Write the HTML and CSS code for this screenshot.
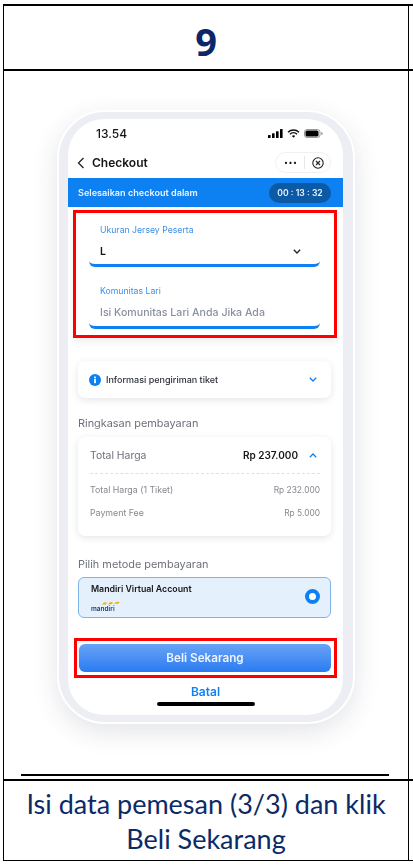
FILE: index.html
```html
<!DOCTYPE html>
<html lang="en">
<head>
    <meta charset="UTF-8">
    <meta name="viewport" content="width=device-width, initial-scale=1.0">
    <link rel="stylesheet" href="styles.css">
    <title>Checkout</title>
</head>
<body>
  <table class="sheet">
    <tr class="row-number">
      <td class="step-number">9</td>
      <td></td>
    </tr>
    <tr class="row-shot">
      <td class="shot">
        <div class="phone">
          <div class="screen">
            <div class="status">
              <span class="time">13.54</span>
              <span class="status-icons">
                <svg width="15" height="9" viewBox="0 0 15 9"><rect x="0" y="6" width="2.6" height="3" rx=".6"/><rect x="4" y="4.2" width="2.6" height="4.8" rx=".6"/><rect x="8" y="2.2" width="2.6" height="6.8" rx=".6"/><rect x="12" y="0" width="2.6" height="9" rx=".6"/></svg>
                <svg width="13" height="9" viewBox="0 0 13 9"><path d="M1 3.2a8 8 0 0 1 11 0M3 5.2a5 5 0 0 1 7 0" fill="none" stroke="#111" stroke-width="1.5"/><path d="M4.9 6.9a2.4 2.4 0 0 1 3.2 0L6.500 8.800z"/></svg>
                <svg width="19" height="9" viewBox="0 0 19 9"><rect x=".5" y=".5" width="15.500" height="8" rx="2.500" fill="none" stroke="#999"/><rect x="1.500" y="1.500" width="13" height="6" rx="1.500"/><path d="M17.200 3v3a1.500 1.500 0 0 0 0-3z" fill="#999"/></svg>
              </span>
            </div>
            <div class="nav">
              <svg class="back" width="8" height="12" viewBox="0 0 8 12"><path d="M6.500 1L1.500 6l5 5" fill="none" stroke="#222" stroke-width="1.300"/></svg>
              <span class="nav-title">Checkout</span>
              <span class="capsule">
                <span class="dots">&bull;&bull;&bull;</span>
                <span class="capsule-line"></span>
                <svg width="12" height="12" viewBox="0 0 12 12"><circle cx="6" cy="6" r="5.200" fill="none" stroke="#222" stroke-width="1.100"/><path d="M4 4l4 4M8 4l-4 4" stroke="#222" stroke-width="1.100"/></svg>
              </span>
            </div>
            <div class="timer-bar">
              <span>Selesaikan checkout dalam</span>
              <span class="timer">00 : 13 : 32</span>
            </div>

            <div class="form-mark">
              <div class="field">
                <div class="field-label">Ukuran Jersey Peserta</div>
                <div class="field-value">
                  <span>L</span>
                  <svg width="8" height="5" viewBox="0 0 8 5"><path d="M.8.8L4 4l3.200-3.200" fill="none" stroke="#222" stroke-width="1.300"/></svg>
                </div>
              </div>
              <div class="field">
                <div class="field-label">Komunitas Lari</div>
                <div class="field-value placeholder">Isi Komunitas Lari Anda Jika Ada</div>
              </div>
            </div>

            <div class="card info">
              <svg width="12" height="12" viewBox="0 0 12 12"><circle cx="6" cy="6" r="6" fill="#0d80f2"/><rect x="5.100" y="5" width="1.800" height="4.200" fill="#fff"/><rect x="5.100" y="2.600" width="1.800" height="1.700" fill="#fff"/></svg>
              <span class="info-text">Informasi pengiriman tiket</span>
              <svg class="chev" width="8" height="5" viewBox="0 0 8 5"><path d="M.8.8L4 4l3.200-3.200" fill="none" stroke="#0d80f2" stroke-width="1.300"/></svg>
            </div>

            <div class="section-title">Ringkasan pembayaran</div>
            <div class="card summary">
              <div class="summary-head">
                <span class="total-label">Total Harga</span>
                <span class="total-value">Rp 237.000</span>
                <svg class="chev" width="8" height="5" viewBox="0 0 8 5"><path d="M.8 4.200L4 1l3.200 3.200" fill="none" stroke="#0d80f2" stroke-width="1.300"/></svg>
              </div>
              <div class="summary-row"><span>Total Harga (1 Tiket)</span><span>Rp 232.000</span></div>
              <div class="summary-row"><span>Payment Fee</span><span>Rp 5.000</span></div>
            </div>

            <div class="section-title method-title">Pilih metode pembayaran</div>
            <div class="method">
              <div>
                <div class="method-name">Mandiri Virtual Account</div>
                <div class="logo">
                  <svg width="18" height="4" viewBox="0 0 18 4"><path d="M0 3.500q2-3 5-1.800l-1.200 1.800zM6 3.200q2-3 5-1.800L9.800 3.200zM12 2.800q2-2.800 5.800-1.600l-1.800 1.600z" fill="#f2b010"/></svg>
                  <span>mandiri</span>
                </div>
              </div>
              <span class="radio"></span>
            </div>

            <div class="buy-mark"><div class="buy">Beli Sekarang</div></div>
            <div class="cancel">Batal</div>
            <div class="home-bar"></div>
          </div>
        </div>
        <div class="rule"></div>
      </td>
      <td></td>
    </tr>
    <tr class="row-caption">
      <td class="caption">Isi data pemesan (3/3) dan klik<br>Beli Sekarang</td>
      <td></td>
    </tr>
  </table>
</body>
</html>
```

FILE: styles.css
```css
html, body {
  margin: 0;
  height: 100%;
  overflow: hidden;
  background: #fff;
}

.sheet {
  margin: 4px 0 0 3px;
  width: 412px;
  table-layout: fixed;
  border-collapse: collapse;
  font-family: "Lato", sans-serif;
  color: #0b2a66;
}
.sheet td {
  padding: 0;
  border-left: 1px solid #000;
  border-top: 2px solid #000;
}
.sheet td:first-child {
  width: 404px;
}
.row-number td { height: 63px; }
.row-shot td { height: 708px; }
.row-caption td {
  height: 79px;
  border-bottom: 1px solid #000;
}

.sheet .step-number {
  padding-top: 7px;
  height: 56px;
  text-align: center;
  font-size: 38px;
  font-weight: 700;
  color: #0a2767;
  font-family: "Open Sans", sans-serif;
}

.shot {
  vertical-align: top;
}
.rule {
  width: 368px;
  height: 2px;
  margin: 50px auto 0 17px;
  background: #000;
}
.caption {
  text-align: center;
  font-size: 27px;
  line-height: 35px;
}

/* phone */
.phone {
  box-sizing: border-box;
  width: 298px;
  height: 614px;
  margin: 39px 0 0 53px;
  padding: 7px 10px 7px 9px;
  background: #eceef3;
  border: 2px solid #fff;
  border-radius: 48px;
  box-shadow: 0 8px 26px rgba(40, 50, 80, .13);
  font-family: "Inter", sans-serif;
  color: #151515;
  filter: blur(.45px);
}
.screen {
  height: 596px;
  background: #fff;
  border-radius: 36px;
  overflow: hidden;
  display: flex;
  flex-direction: column;
}

.status {
  height: 28px;
  flex: none;
  padding: 0 20px 0 28px;
  display: flex;
  align-items: center;
  justify-content: space-between;
}
.time {
  font-size: 12px;
  font-weight: 500;
}
.status-icons {
  display: flex;
  align-items: center;
  gap: 4px;
}

.nav {
  height: 31px;
  flex: none;
  padding: 0 12px 0 9px;
  display: flex;
  align-items: center;
}
.nav-title {
  margin-left: 7px;
  font-size: 12px;
  font-weight: 600;
}
.capsule {
  margin-left: auto;
  width: 56px;
  height: 21px;
  border: 1px solid #f0f0f3;
  border-radius: 11px;
  display: flex;
  align-items: center;
  justify-content: space-between;
  padding: 0 6px 0 8px;
  box-sizing: border-box;
}
.dots {
  font-size: 7px;
  letter-spacing: .5px;
}
.capsule-line {
  width: 1px;
  height: 13px;
  background: #e6e7ea;
}

.timer-bar {
  height: 29px;
  flex: none;
  padding: 0 12px 0 10px;
  background: #0d80f2;
  color: #e8f3ff;
  font-size: 9.100px;
  font-weight: 600;
  display: flex;
  align-items: center;
  justify-content: space-between;
}
.timer {
  width: 62px;
  height: 20px;
  border-radius: 10px;
  background: #0c5aa6;
  font-size: 8.600px;
  line-height: 20px;
  text-align: center;
}

/* red marks around the form and the button */
.form-mark {
  flex: none;
  margin: 3px 6px 0 5px;
  height: 128px;
  box-sizing: border-box;
  border: 3px solid #f00;
  padding: 0 14px 0 13px;
  box-shadow: 0 4px 6px rgba(40, 50, 80, .08);
}
.field {
  height: 54px;
  border-bottom: 3px solid #0d80f2;
  border-radius: 0 0 6px 6px;
  box-sizing: border-box;
  padding: 12px 0 0 11px;
}
.field + .field {
  margin-top: 8px;
  padding-top: 11px;
}
.field-label {
  font-size: 8.700px;
  line-height: 11px;
  color: #3c8ee6;
}
.field-value {
  margin-top: 10px;
  padding-right: 19px;
  display: flex;
  align-items: center;
  justify-content: space-between;
  font-size: 10.500px;
  line-height: 11px;
  font-weight: 600;
}
.placeholder {
  color: #8a8f9e;
  font-size: 10.600px;
  font-weight: 500;
}

.card {
  margin: 0 12px 0 10px;
  background: #fff;
  border-radius: 7px;
  box-shadow: 0 2px 7px rgba(40, 50, 80, .12);
}
.info {
  flex: none;
  margin-top: 23px;
  height: 37px;
  padding: 0 14px 0 11px;
  display: flex;
  align-items: center;
}
.info-text {
  margin-left: 5px;
  font-size: 9px;
  font-weight: 500;
  color: #2b2f38;
}
.chev {
  margin-left: auto;
}

.section-title {
  margin: 18px 0 0 10px;
  font-size: 10.900px;
  line-height: 14px;
  color: #6d7079;
}
.summary {
  flex: none;
  margin-top: 7px;
  height: 99px;
  padding: 0 11px 0 12px;
}
.summary-head {
  height: 36px;
  border-bottom: 1px dashed #dfe1e6;
  display: flex;
  align-items: center;
}
.total-label {
  font-size: 10.400px;
  color: #6d7079;
}
.total-value {
  margin-left: auto;
  font-size: 10px;
  font-weight: 600;
}
.summary-head .chev {
  margin: 0 3px 0 11px;
}
.summary-row {
  height: 23px;
  display: flex;
  align-items: center;
  justify-content: space-between;
  font-size: 8.800px;
  color: #85878e;
}
.summary-row:nth-child(2) {
  margin-top: 4px;
}
.summary-row span + span {
  font-size: 8.400px;
}

.method-title {
  margin-top: 21px;
}
.method {
  flex: none;
  margin: 6px 12px 0 10px;
  height: 41px;
  box-sizing: border-box;
  border: 1px solid #7fb4e6;
  border-radius: 6px;
  background: #e4f1fd;
  padding: 5px 10px 0 12px;
  display: flex;
  justify-content: space-between;
  align-items: flex-start;
}
.method-name {
  font-size: 8.800px;
  font-weight: 600;
}
.logo {
  position: relative;
  margin-top: 6px;
  height: 12px;
  font-size: 6.500px;
  line-height: 18px;
  font-weight: 600;
  color: #1d3f72;
}
.logo svg {
  position: absolute;
  left: 11px;
  top: 1px;
}
.radio {
  margin-top: 6px;
  width: 15px;
  height: 15px;
  box-sizing: border-box;
  border: 4px solid #0d80f2;
  border-radius: 50%;
  background: #fff;
}

.buy-mark {
  flex: none;
  margin: 20px 6px 0 6px;
  height: 40px;
  box-sizing: border-box;
  border: 3px solid #f00;
  padding: 3px 3px 3px 2px;
}
.buy {
  height: 28px;
  border-radius: 6px;
  background: linear-gradient(#69a3f5, #2a7bf2);
  color: #eef5ff;
  font-size: 11.700px;
  font-weight: 600;
  line-height: 28px;
  text-align: center;
}
.cancel {
  margin-top: 6px;
  text-align: center;
  font-size: 12px;
  line-height: 15px;
  font-weight: 600;
  color: #0d80f2;
}
.home-bar {
  width: 98px;
  height: 4px;
  margin: 3px auto 0;
  border-radius: 2px;
  background: #000;
}
```
